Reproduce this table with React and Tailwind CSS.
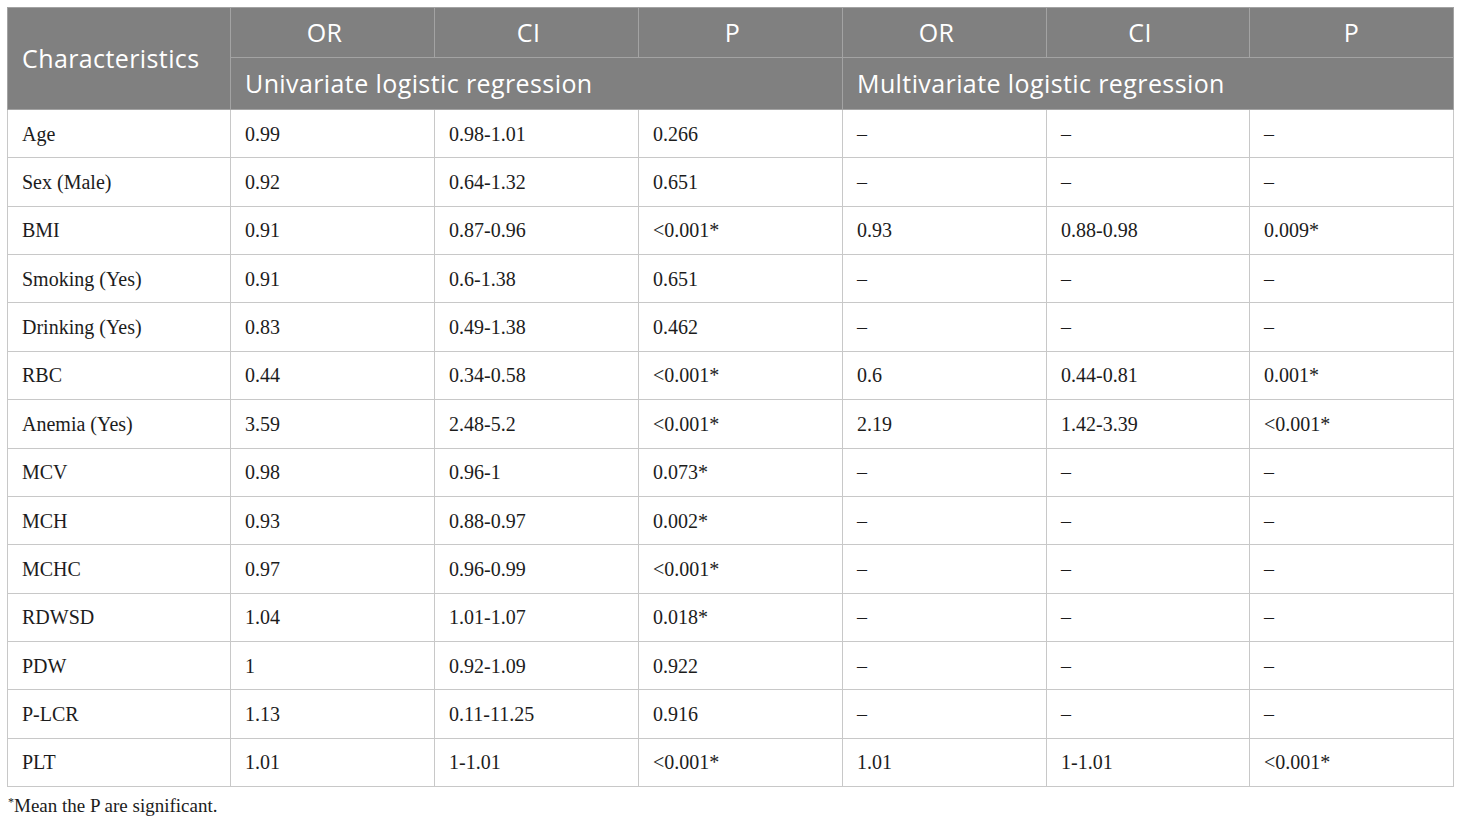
const rows = [
  ['Age', '0.99', '0.98-1.01', '0.266', '–', '–', '–'],
  ['Sex (Male)', '0.92', '0.64-1.32', '0.651', '–', '–', '–'],
  ['BMI', '0.91', '0.87-0.96', '<0.001*', '0.93', '0.88-0.98', '0.009*'],
  ['Smoking (Yes)', '0.91', '0.6-1.38', '0.651', '–', '–', '–'],
  ['Drinking (Yes)', '0.83', '0.49-1.38', '0.462', '–', '–', '–'],
  ['RBC', '0.44', '0.34-0.58', '<0.001*', '0.6', '0.44-0.81', '0.001*'],
  ['Anemia (Yes)', '3.59', '2.48-5.2', '<0.001*', '2.19', '1.42-3.39', '<0.001*'],
  ['MCV', '0.98', '0.96-1', '0.073*', '–', '–', '–'],
  ['MCH', '0.93', '0.88-0.97', '0.002*', '–', '–', '–'],
  ['MCHC', '0.97', '0.96-0.99', '<0.001*', '–', '–', '–'],
  ['RDWSD', '1.04', '1.01-1.07', '0.018*', '–', '–', '–'],
  ['PDW', '1', '0.92-1.09', '0.922', '–', '–', '–'],
  ['P-LCR', '1.13', '0.11-11.25', '0.916', '–', '–', '–'],
  ['PLT', '1.01', '1-1.01', '<0.001*', '1.01', '1-1.01', '<0.001*'],
];

const sans = 'font-["Open_Sans",sans-serif]';
const serif = 'font-["Liberation_Serif",serif]';

export default function App() {
  return (
    <div className="min-h-screen bg-white pl-[7px] pt-[7px]">
      <table className="w-[1446px] table-fixed border-collapse border border-[#c8c8c8]">
        <colgroup>
          <col className="w-[223px]" />
          <col className="w-[204px]" />
          <col className="w-[204px]" />
          <col className="w-[204px]" />
          <col className="w-[204px]" />
          <col className="w-[203px]" />
          <col className="w-[204px]" />
        </colgroup>
        <thead className={`bg-[#808080] text-white ${sans} text-[25px] tracking-[0.4px] font-normal`}>
          <tr className="h-[50px]">
            <th rowSpan={2} className="border border-[#a3a3a3] px-[14px] text-left font-normal">
              Characteristics
            </th>
            {['OR', 'CI', 'P', 'OR', 'CI'].map((h, i) => (
              <th key={i} className="border border-[#a3a3a3] pr-[16px] text-center font-normal">
                {h}
              </th>
            ))}
            <th className="border border-[#a3a3a3] text-center font-normal">P</th>
          </tr>
          <tr className="h-[52px]">
            <th colSpan={3} className="border border-[#a3a3a3] px-[14px] text-left font-normal">
              Univariate logistic regression
            </th>
            <th colSpan={3} className="border border-[#a3a3a3] px-[14px] text-left font-normal">
              Multivariate logistic regression
            </th>
          </tr>
        </thead>
        <tbody className={`${serif} text-[20px] text-[#1c1c1c]`}>
          {rows.map((r) => (
            <tr key={r[0]} className="h-[48.36px]">
              {r.map((c, i) => (
                <td key={i} className="border border-[#c8c8c8] px-[14px] align-middle">
                  {c}
                </td>
              ))}
            </tr>
          ))}
        </tbody>
      </table>
      <p className={`mt-[5px] pl-[1px] ${serif} text-[19px] text-[#1c1c1c]`}>
        <sup className="text-[12px]">*</sup>Mean the P are significant.
      </p>
    </div>
  );
}
